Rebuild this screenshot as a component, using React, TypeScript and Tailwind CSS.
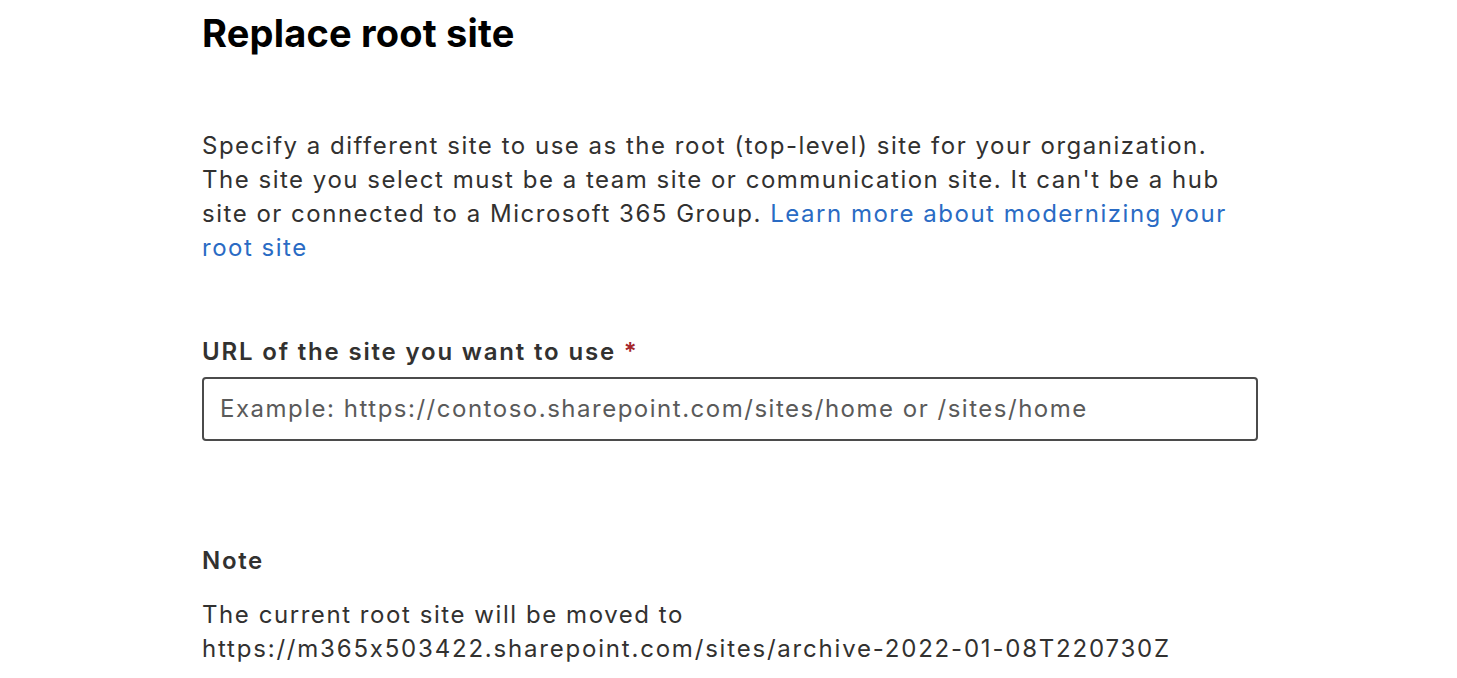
export default function App() {
  return (
    <div
      className="min-h-[678px] bg-white pl-[202px] text-[#323130] [font-feature-settings:'calt'_0]"
      style={{ fontFamily: "Inter, 'Noto Sans', sans-serif" }}
    >
      <div className="w-[1056px]">
        {/* Title */}
        <h1 className="pt-[11px] text-[38px] font-bold leading-[44px] tracking-[0.2px] text-black">
          Replace root site
        </h1>

        {/* Description */}
        <p className="mt-[74px] text-[24px] leading-[34px] tracking-[0.063em]">
          Specify a different site to use as the root (top-level) site for your organization.
          <br />
          The site you select must be a team site or communication site. It can&apos;t be a hub
          <br />
          site or connected to a Microsoft 365 Group.{" "}
          <a href="#" className="text-[#2a6bc4]">
            Learn more about modernizing your
            <br />
            root site
          </a>
        </p>

        {/* URL field */}
        <div className="mt-[70px]">
          <label className="block text-[24px] font-semibold leading-[34px] tracking-[0.076em]">
            URL of the site you want to use <span className="text-[#a4262c]">*</span>
          </label>
          <div className="mt-[8px] flex h-[64px] items-center rounded-[4px] border-2 border-[#4b4b4b] px-[16px]">
            <input
              className="w-full bg-transparent text-[24px] tracking-[0.063em] outline-none placeholder:text-[#5a5a5a]"
              placeholder="Example: https://contoso.sharepoint.com/sites/home or /sites/home"
            />
          </div>
        </div>

        {/* Note */}
        <div className="mt-[103px]">
          <h2 className="text-[24px] font-semibold leading-[34px] tracking-[0.07em]">Note</h2>
          <p className="mt-[20px] text-[24px] leading-[34px] tracking-[0.065em]">
            The current root site will be moved to
            <br />
            <span className="tracking-[0.075em]">
              https://m365x503422.sharepoint.com/sites/archive-2022-01-08T220730Z
            </span>
          </p>
        </div>
      </div>
    </div>
  );
}
